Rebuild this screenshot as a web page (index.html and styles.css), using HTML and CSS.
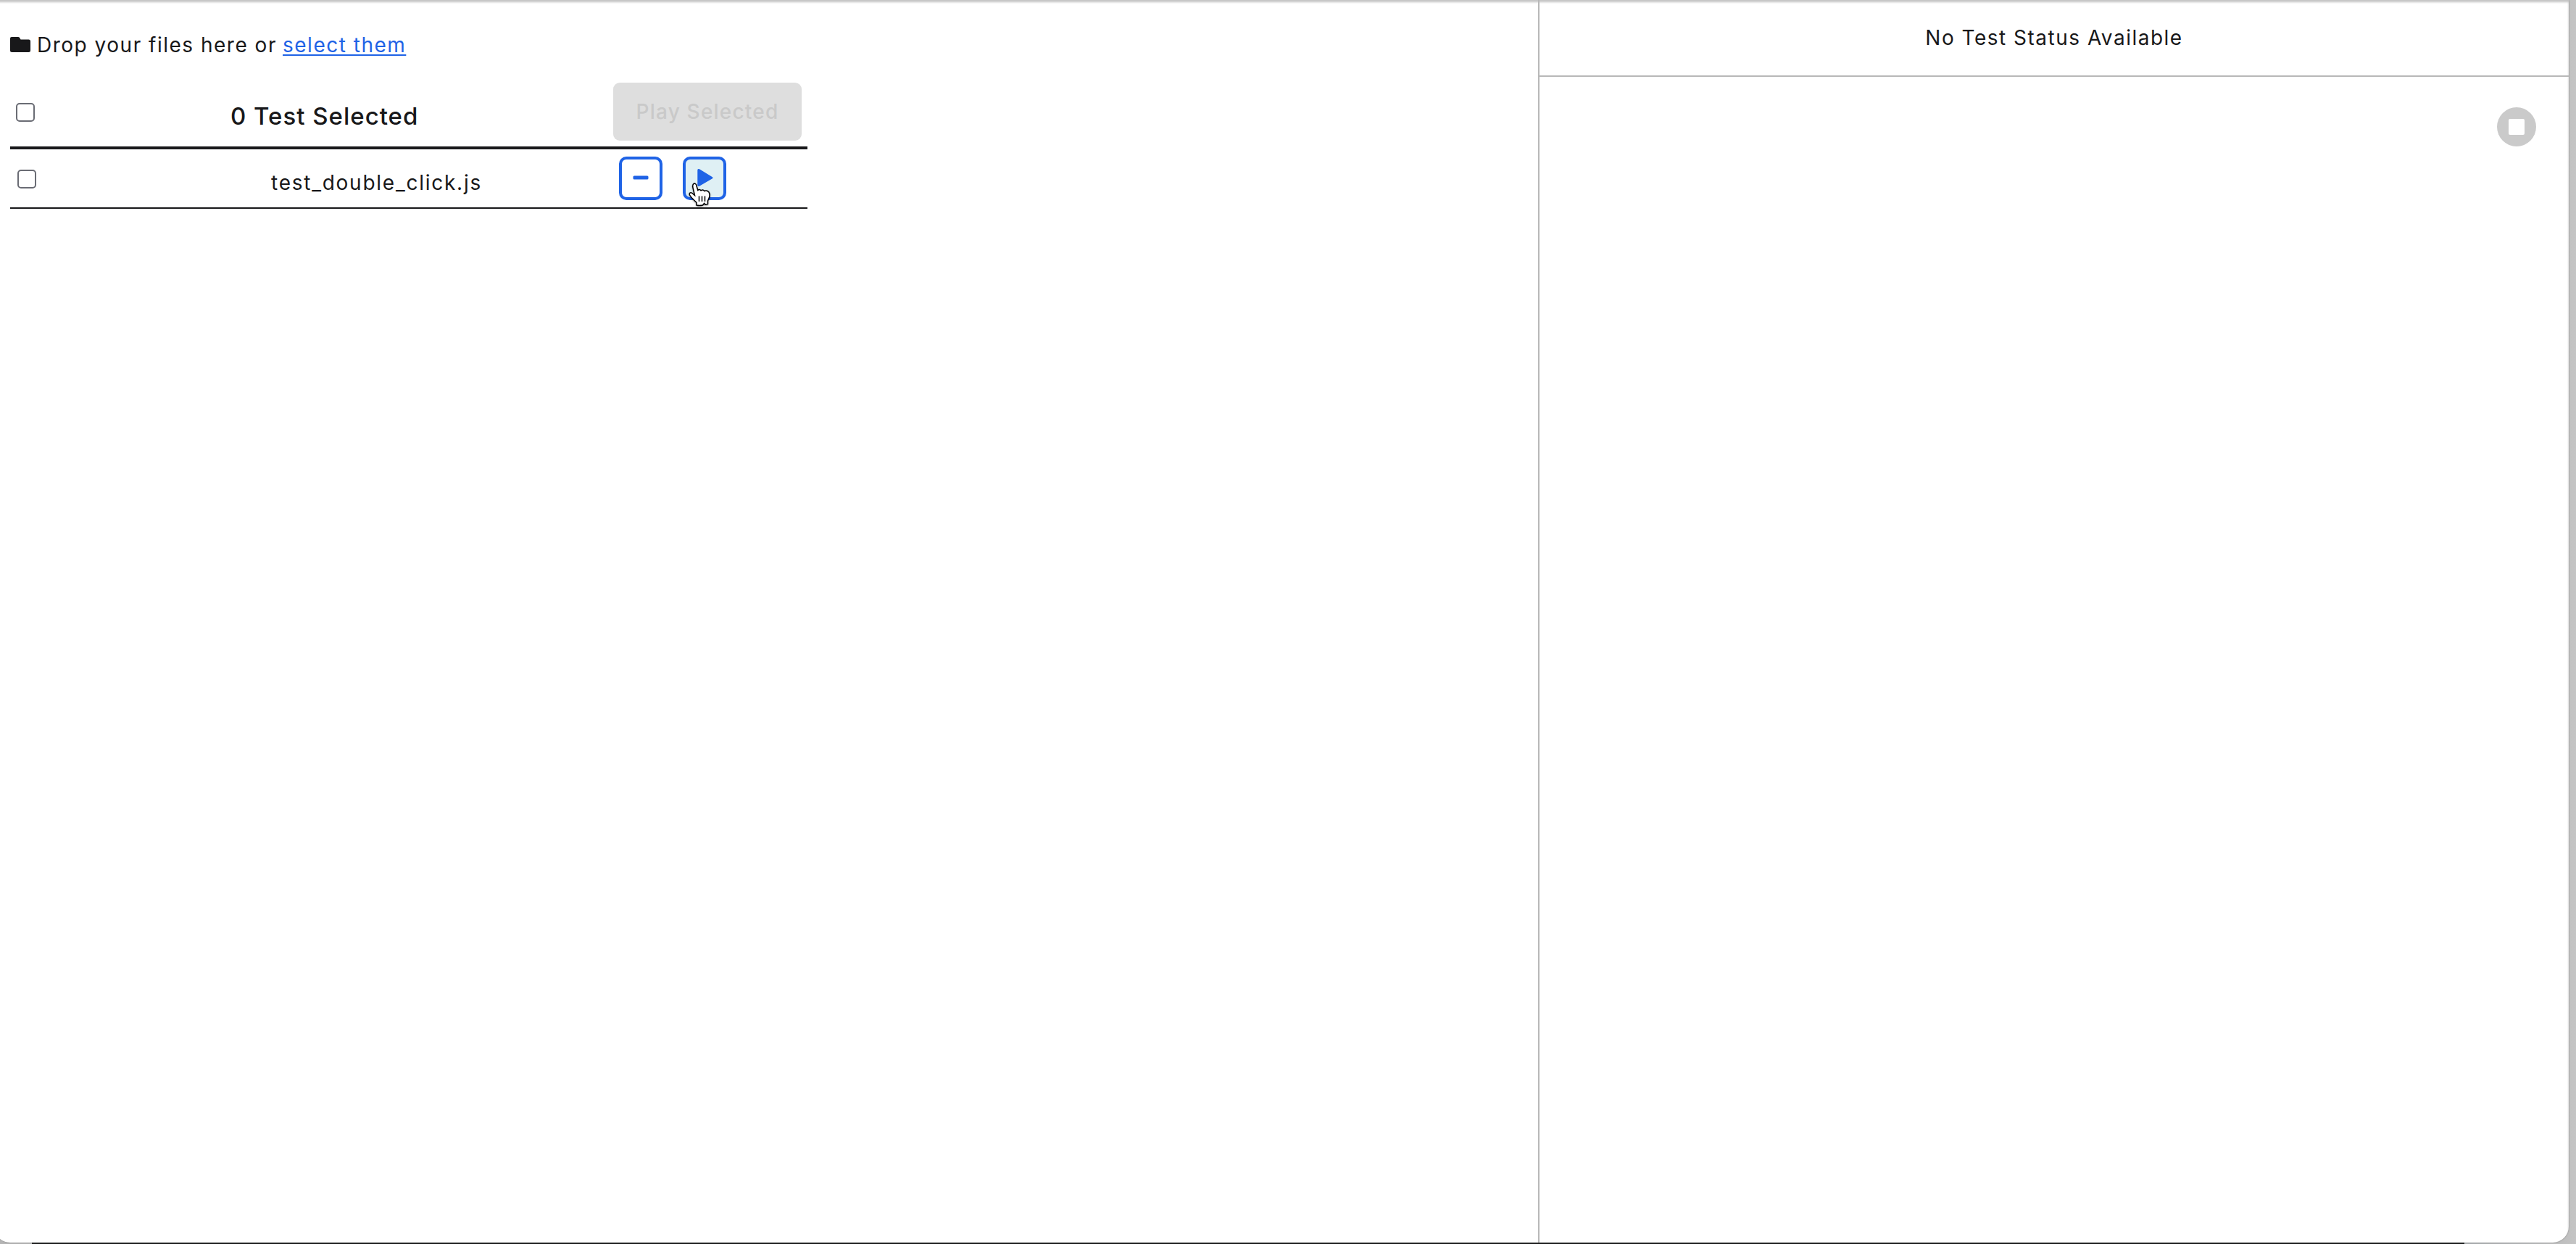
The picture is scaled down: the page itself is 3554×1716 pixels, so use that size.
FILE: index.html
```html
<!DOCTYPE html>
<html lang="en">
<head>
    <meta charset="UTF-8">
    <title>Test Runner</title>
    <link rel="stylesheet" href="styles.css">
</head>
<body>
    <div class="window">
        <div class="files-panel">
            <div class="drop-zone">
                <svg class="folder" viewBox="0 0 28 21"><path d="M2 0h9q1.500 0 2.200 1.300L14.500 3.500H25.500Q28 3.500 28 6V18.500Q28 21 25.500 21H2.500Q0 21 0 18.500V2Q0 0 2 0Z"/></svg>
                <span class="drop-text">Drop your files here or</span>
                <a class="select-link" href="#">select them</a>
            </div>
            <div class="list-header">
                <input type="checkbox" class="check">
                <h3>0 Test Selected</h3>
                <button class="play-selected" disabled>Play Selected</button>
            </div>
            <div class="test-row">
                <input type="checkbox" class="check">
                <span class="test-name">test_double_click.js</span>
                <button class="icon-btn">
                    <svg viewBox="0 0 52 52"><rect x="15.500" y="22.500" width="21" height="5" rx="1.500"/></svg>
                </button>
                <button class="icon-btn hovered">
                    <svg viewBox="0 0 52 52"><path d="M16.300 15Q16.300 12 19 13.300L36.500 24Q38.500 25.200 36.500 26.500L19 36.700Q16.300 38 16.300 35Z"/></svg>
                    <svg class="cursor" viewBox="0 0 30 33"><path d="M6.200 2.500C8 -.2 10.800 1.500 11 4.500L12.800 10.500Q15 8.500 17 10.800Q20 9 21.800 11.500Q25.500 10 28 13C30.500 17 28.500 21 26.500 25V29.500Q23.500 31.500 21.500 28.500L19.500 31Q15 32 11 31V27.500C8 24 4 21.500 1.500 17C.5 13.500 3.500 12.800 5.500 15L8.500 17.500L6 7Q5.200 4.500 6.200 2.500Z"/><path d="M14.500 18.500v7.500M18.500 18.500v7.500M22.500 18.500v7.500"/></svg>
                </button>
            </div>
        </div>
        <div class="status-panel">
            <div class="status-header"><span>No Test Status Available</span></div>
            <div class="status-tools">
                <button class="stop-btn" disabled><span class="stop-icon"></span></button>
            </div>
        </div>
    </div>
</body>
</html>
```
FILE: styles.css
```css
* {
    margin: 0;
    padding: 0;
    box-sizing: border-box;
}

html {
    height: 100%;
    overflow: hidden;
}

body {
    height: 100%;
    padding-right: 10px;
    overflow: hidden;
    font-family: Inter, "Noto Sans", sans-serif;
    font-size: 28px;
    line-height: 34px;
    letter-spacing: 1.5px;
    color: #18181a;
    background: linear-gradient(to right, #b5b5b5 44px, #141515 44px, #141515 3400px, #a9adb0 3400px, #bebebe 3530px, #c4c4c4);
}

.window {
    display: flex;
    height: 1714px;
    margin-left: -8px;
    padding-left: 8px;
    background: #fff;
    border-radius: 0 0 22px 22px;
    box-shadow: inset 0 3px 3px #c4c4c4, 0 0 2px #777;
}

.files-panel {
    width: 2122px;
    padding: 45px 0 0 14px;
}

.drop-zone {
    display: flex;
    height: 57px;
    align-items: flex-start;
}

.folder {
    width: 28px;
    height: 21px;
    margin: 6px 9px 0 0;
    fill: #18181a;
}

.drop-text {
    width: 339px;
    white-space: nowrap;
}

.select-link {
    color: #1f63e6;
    text-decoration: underline;
    text-decoration-thickness: 2px;
    text-underline-offset: 3px;
    text-decoration-skip-ink: none;
}

.list-header {
    display: flex;
    width: 1100px;
    height: 104px;
    padding: 12px 8px 0;
    border-bottom: 4px solid #18181a;
}

.check {
    appearance: none;
    width: 26px;
    height: 26px;
    margin-top: 28px;
    border: 2px solid #6a6c74;
    border-radius: 5px;
}

h3 {
    width: 528px;
    margin: 26px 0 0 270px;
    font-size: 33px;
    line-height: 40px;
    font-weight: 500;
    letter-spacing: 1px;
    white-space: nowrap;
}

button {
    border: none;
    font: inherit;
    letter-spacing: inherit;
}

.play-selected {
    width: 260px;
    height: 80px;
    margin-left: auto;
    color: #c9c9c9;
    background: #dedede;
    border-radius: 9px;
    font-weight: 500;
    letter-spacing: 1.2px;
    white-space: nowrap;
}

.test-row {
    display: flex;
    width: 1100px;
    height: 82px;
    padding: 10px 10px 0;
    border-bottom: 2px solid #18181a;
}

.test-row .check {
    margin-top: 18px;
}

.test-name {
    width: 480px;
    margin: 19px 0 0 324px;
    letter-spacing: 1.75px;
}

.icon-btn {
    position: relative;
    width: 60px;
    height: 60px;
    margin-right: 28px;
    background: #fff;
    border: 4px solid #1f63e6;
    border-radius: 10px;
}

.icon-btn svg {
    display: block;
    width: 52px;
    height: 52px;
    fill: #1f63e6;
}

.icon-btn.hovered {
    background: #dff0f4;
}

.icon-btn .cursor {
    position: absolute;
    left: 4px;
    top: 32px;
    width: 30px;
    height: 33px;
    fill: #fff;
    stroke: #000;
    stroke-width: 1.5;
    filter: drop-shadow(0 1px 1px rgba(0, 0, 0, 0.4));
    overflow: visible;
}

.status-panel {
    flex: 1;
    border-left: 2px solid #b8b8b8;
}

.status-header {
    height: 106px;
    padding-top: 35px;
    text-align: center;
    border-bottom: 2px solid #b8b8b8;
}

.status-tools {
    display: flex;
    justify-content: flex-end;
    padding: 42px 45px 0;
}

.stop-btn {
    display: flex;
    align-items: center;
    justify-content: center;
    width: 54px;
    height: 54px;
    background: #cacaca;
    border-radius: 50%;
}

.stop-icon {
    width: 22px;
    height: 22px;
    background: #fff;
    border-radius: 2px;
}
```
